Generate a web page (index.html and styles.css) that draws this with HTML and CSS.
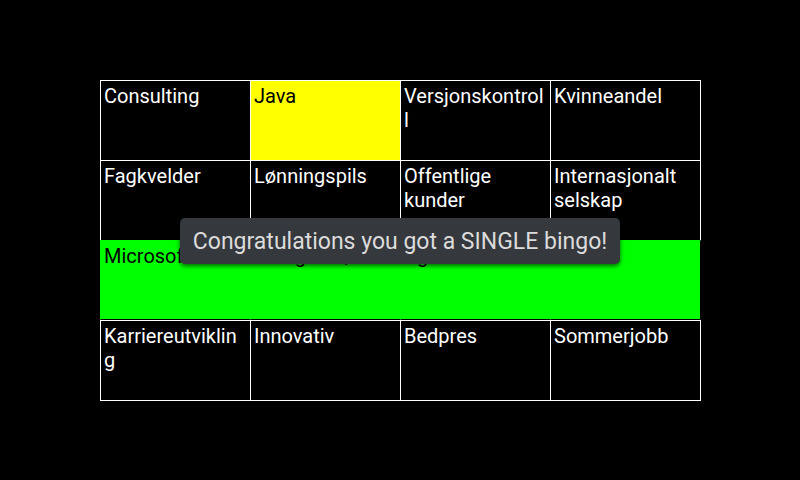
FILE: index.html
```html
<!DOCTYPE html>
<html>
<head>
<meta charset="utf-8">
<link rel="stylesheet" href="styles.css">
</head>
<body>
<div class="screen">
  <div class="board">
    <div class="cell">Consulting</div>
    <div class="cell marked">Java</div>
    <div class="cell">Versjonskontroll</div>
    <div class="cell last-col">Kvinneandel</div>
    <div class="cell">Fagkvelder</div>
    <div class="cell">Lønningspils</div>
    <div class="cell">Offentlige kunder</div>
    <div class="cell last-col">Internasjonalt selskap</div>
    <div class="cell bingo">Microsoft</div>
    <div class="cell bingo">PostgreSQL</div>
    <div class="cell bingo">Agile</div>
    <div class="cell bingo last-col">Cloud</div>
    <div class="cell last-row">Karriereutvikling</div>
    <div class="cell last-row">Innovativ</div>
    <div class="cell last-row">Bedpres</div>
    <div class="cell last-row last-col">Sommerjobb</div>
  </div>
  <div class="toast">Congratulations you got a SINGLE bingo!</div>
</div>
</body>
</html>
```
FILE: styles.css
```css
html, body {
  margin: 0;
  padding: 0;
  background: #000;
}
.screen {
  position: relative;
  width: 800px;
  height: 480px;
  background: #000;
  font-family: Roboto, "Liberation Sans", sans-serif;
  padding: 80px 0 0 100px;
  box-sizing: border-box;
}
.board {
  display: grid;
  grid-template-columns: 150px 150px 150px 151px;
  grid-template-rows: 80px 80px 80px 81px;
}
.cell {
  box-sizing: border-box;
  border-left: 1px solid #fff;
  border-top: 1px solid #fff;
  padding: 3px 5px 0 3px;
  color: #fff;
  font-size: 20px;
  line-height: 24px;
  overflow-wrap: anywhere;
  background: #000;
}
.cell.last-col {
  border-right: 1px solid #fff;
  padding-right: 4px;
}
.cell.last-row {
  border-bottom: 1px solid #fff;
}
.cell.marked {
  background: #ffff00;
  color: #000;
}
.cell.bingo {
  background: #00ff00;
  color: #000;
  border-left-color: #00ff00;
  border-top-color: #00ff00;
  border-bottom: 1px solid #000;
}
.cell.bingo.last-col {
  border-right-color: #000;
}
.toast {
  position: absolute;
  left: 180px;
  top: 218px;
  width: 440px;
  height: 46px;
  box-sizing: border-box;
  background: #35383c;
  border-radius: 5px;
  box-shadow: 0 2px 4px rgba(0, 0, 0, 0.6);
  color: #dcdcdc;
  font-size: 23px;
  line-height: 47px;
  text-align: center;
  white-space: nowrap;
}
```
